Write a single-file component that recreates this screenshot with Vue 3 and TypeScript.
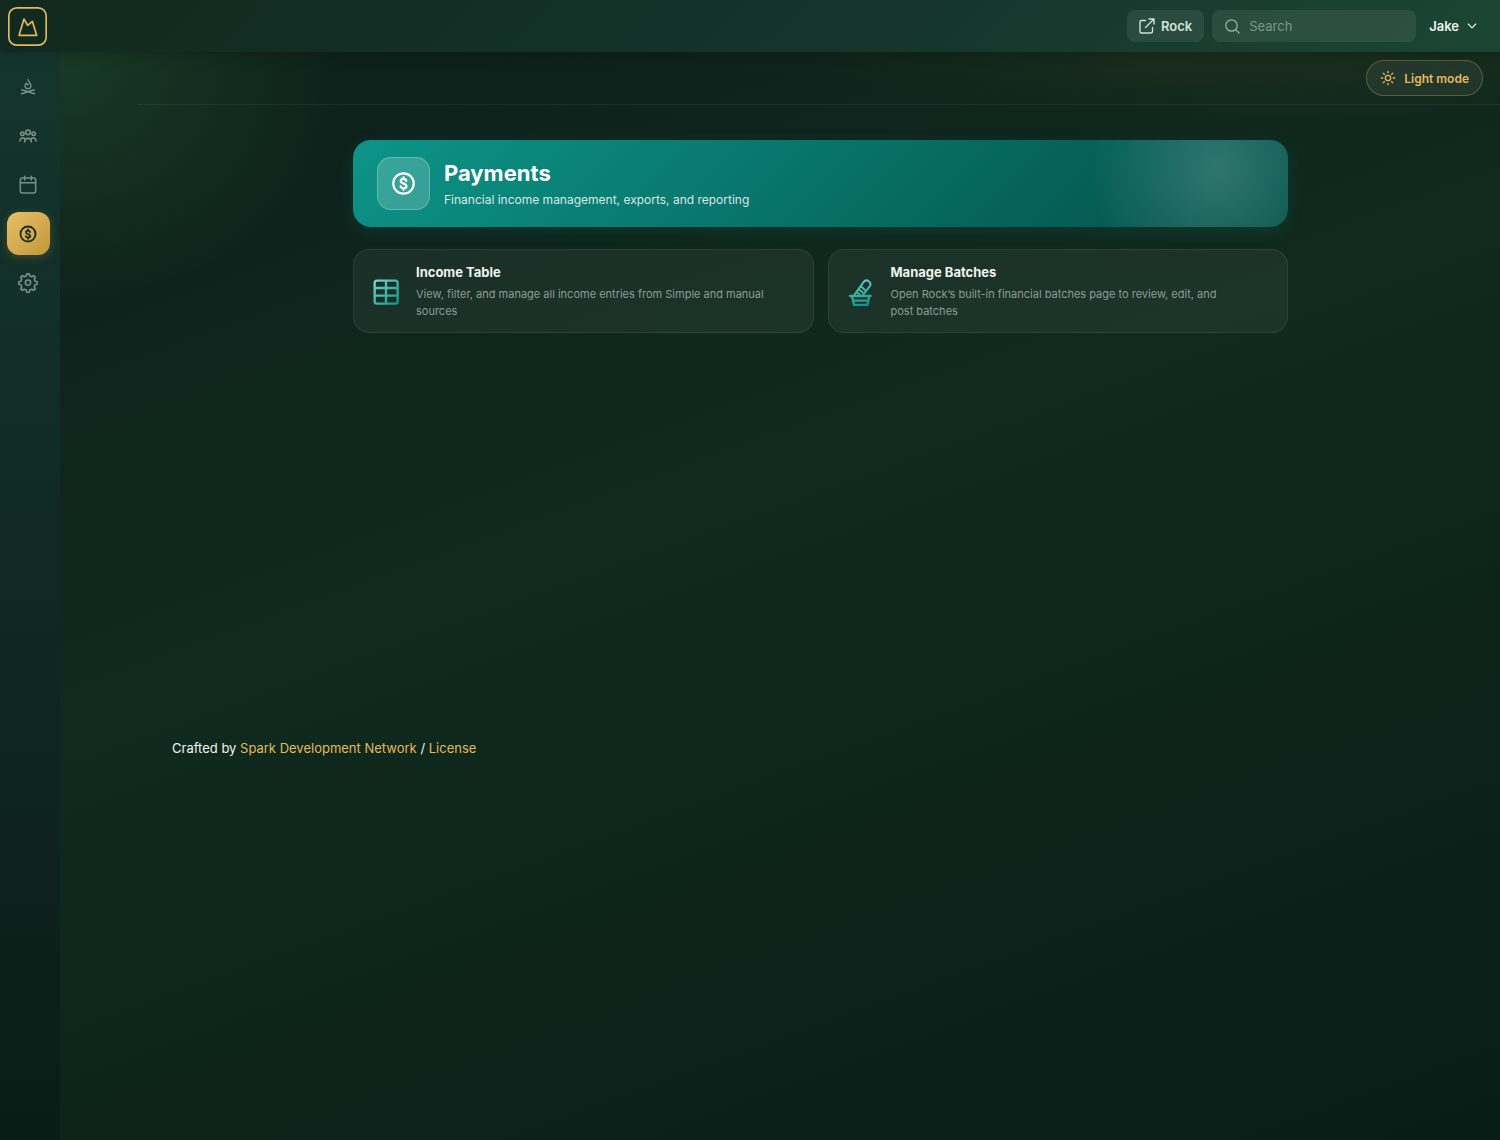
<script setup lang="ts">
import { ref } from 'vue'

interface NavItem {
  id: string
  label: string
}

interface ActionCard {
  id: string
  title: string
  text: string
}

const navItems: NavItem[] = [
  { id: 'home', label: 'Campfire' },
  { id: 'people', label: 'People' },
  { id: 'calendar', label: 'Calendar' },
  { id: 'payments', label: 'Payments' },
  { id: 'settings', label: 'Settings' },
]

const cards: ActionCard[] = [
  {
    id: 'table',
    title: 'Income Table',
    text: 'View, filter, and manage all income entries from Simple and manual sources',
  },
  {
    id: 'batches',
    title: 'Manage Batches',
    text: 'Open Rock’s built-in financial batches page to review, edit, and post batches',
  },
]

const active = ref('payments')
const query = ref('')
</script>

<template>
  <div class="app">
    <header class="topbar">
      <a class="logo" href="#" aria-label="Home">
        <svg width="39" height="39" viewBox="0 0 117 117" fill="none" stroke="currentColor">
          <rect x="2.5" y="2.5" width="112" height="112" rx="24" stroke-width="5" />
          <path d="M33 85 48 36l11 19 14-12 13 42z" stroke-width="5" stroke-linejoin="round" />
        </svg>
      </a>
      <div class="tools">
        <a class="rock" href="#">
          <svg width="16" height="16" viewBox="0 0 16 16" fill="none" stroke="currentColor" stroke-width="1.4" stroke-linecap="round" stroke-linejoin="round">
            <path d="M6.500 2.500H2.500a1.500 1.500 0 0 0-1.500 1.500v9.500A1.500 1.500 0 0 0 2.500 15H12a1.500 1.500 0 0 0 1.500-1.500V9.500M10 1h5v5M15 1 6.500 9.500" />
          </svg>
          <span>Rock</span>
        </a>
        <label class="search">
          <svg width="15" height="15" viewBox="0 0 15 15" fill="none" stroke="currentColor" stroke-width="1.200" stroke-linecap="round">
            <circle cx="6.500" cy="6.500" r="5.700" />
            <path d="m10.700 10.700 3.300 3.300" />
          </svg>
          <input v-model="query" type="search" placeholder="Search" aria-label="Search" />
        </label>
        <button class="user" type="button">
          <span>Jake</span>
          <svg width="10" height="6" viewBox="0 0 10 6" fill="none" stroke="currentColor" stroke-width="1.100" stroke-linecap="round" stroke-linejoin="round">
            <path d="m1.200 1 3.800 3.800L8.800 1" />
          </svg>
        </button>
      </div>
    </header>

    <div class="body">
      <nav class="sidebar" aria-label="Main">
        <a
          v-for="item in navItems"
          :key="item.id"
          href="#"
          class="nav-item"
          :class="{ active: item.id === active }"
          :aria-label="item.label"
          @click.prevent="active = item.id"
        >
          <svg v-if="item.id === 'home'" width="20" height="20" viewBox="0 0 60 60" fill="none" stroke="currentColor" stroke-width="5" stroke-linecap="round" stroke-linejoin="round">
            <path d="M30 7c-1 6 9 10 9 19a9 9 0 0 1-18 0c0-4 2-7 4-8 0 5 5 7 7 3" stroke-width="4" />
            <path d="M11 39c7 0 12 3 19 5s12 5 19 6M49 39c-7 0-12 3-19 5s-12 5-19 6" />
          </svg>
          <svg v-else-if="item.id === 'people'" width="20" height="20" viewBox="0 0 60 60" fill="none" stroke="currentColor" stroke-width="5" stroke-linecap="round" stroke-linejoin="round">
            <circle cx="30" cy="19" r="7" />
            <circle cx="13" cy="23" r="5" />
            <circle cx="47" cy="23" r="5" />
            <path d="M20 47c0-13 20-13 20 0M6 45c0-8 7-11 13-8M54 45c0-8-7-11-13-8" />
          </svg>
          <svg v-else-if="item.id === 'calendar'" width="20" height="20" viewBox="0 0 60 60" fill="none" stroke="currentColor" stroke-width="4.500" stroke-linecap="round" stroke-linejoin="round">
            <rect x="7" y="9" width="46" height="45" rx="6" />
            <path d="M7 23h46M20 4v11M40 4v11" />
          </svg>
          <svg v-else-if="item.id === 'payments'" width="20" height="20" viewBox="0 0 256 256" fill="none" stroke="currentColor" stroke-width="24" stroke-linecap="round" stroke-linejoin="round">
            <circle cx="128" cy="128" r="96" />
            <path d="M154 104c-3-13-13-19-26-19-15 0-26 8-26 20 0 30 54 18 54 48 0 12-12 20-28 20-14 0-25-6-28-18M128 70v14M128 174v14" />
          </svg>
          <svg v-else width="20" height="20" viewBox="0 0 24 24" fill="none" stroke="currentColor" stroke-width="1.900" stroke-linecap="round" stroke-linejoin="round">
            <circle cx="12" cy="11.500" r="3.200" />
            <path d="M9.900 3.500 10.500 1h3l.6 2.500 2.400 1 2.200-1.300 2.100 2.100-1.300 2.200 1 2.400 2.500.6v3l-2.500.6-1 2.400 1.300 2.200-2.100 2.100-2.200-1.300-2.400 1-.6 2.500h-3l-.6-2.500-2.400-1-2.200 1.300-2.100-2.100 1.300-2.200-1-2.400L1 13.500v-3l2.500-.6 1-2.400-1.300-2.200 2.100-2.100 2.200 1.300z" />
          </svg>
        </a>
      </nav>

      <main class="main">
        <div class="modebar">
          <button class="mode" type="button">
            <svg width="16" height="16" viewBox="0 0 48 48" fill="none" stroke="currentColor" stroke-width="4" stroke-linecap="round">
              <circle cx="24" cy="24" r="8" />
              <path d="M24 4v4M24 40v4M4 24h4M40 24h4M10 10l3 3M35 35l3 3M10 38l3-3M35 13l3-3" />
            </svg>
            <span>Light mode</span>
          </button>
        </div>

        <div class="content">
          <section class="page">
            <div class="hero">
              <div class="hero-icon">
                <svg width="27" height="27" viewBox="0 0 256 256" fill="none" stroke="currentColor" stroke-width="21" stroke-linecap="round" stroke-linejoin="round">
                  <circle cx="128" cy="128" r="97" />
                  <path d="M154 104c-3-13-13-19-26-19-15 0-26 8-26 20 0 30 54 18 54 48 0 12-12 20-28 20-14 0-25-6-28-18M128 70v14M128 174v14" />
                </svg>
              </div>
              <div class="hero-copy">
                <h1>Payments</h1>
                <p>Financial income management, exports, and reporting</p>
              </div>
            </div>

            <div class="cards">
              <a v-for="card in cards" :key="card.id" class="card" href="#">
                <svg v-if="card.id === 'table'" class="card-icon" width="28" height="28" viewBox="0 0 84 84" fill="none" stroke="url(#teal-table)" stroke-width="7">
                  <defs>
                    <linearGradient id="teal-table" gradientUnits="userSpaceOnUse" x1="5" y1="5" x2="79" y2="79">
                      <stop offset="0" stop-color="#7fd8cd" />
                      <stop offset="1" stop-color="#0d9488" />
                    </linearGradient>
                  </defs>
                  <rect x="8" y="8" width="69" height="69" rx="7" />
                  <path d="M8 30h69M8 53h69M42 8v69" />
                </svg>
                <svg v-else class="card-icon" width="28" height="28" viewBox="0 0 84 84" fill="none" stroke="url(#teal-basket)" stroke-width="6" stroke-linecap="round" stroke-linejoin="round">
                  <defs>
                    <linearGradient id="teal-basket" gradientUnits="userSpaceOnUse" x1="30" y1="2" x2="50" y2="84">
                      <stop offset="0" stop-color="#6fd0c5" />
                      <stop offset="1" stop-color="#0d9488" />
                    </linearGradient>
                  </defs>
                  <path d="M21 52 50 12c9-11 26 1 18 13L47 52M44 27l9 8M37 35l9 8M30 43l9 8" />
                  <path d="M9 54h62M15 55l6 26h40l6-26M20 68h42" stroke-width="7" />
                </svg>
                <div class="card-copy">
                  <h2>{{ card.title }}</h2>
                  <p>{{ card.text }}</p>
                </div>
              </a>
            </div>
          </section>

          <footer class="footer">
            Crafted by <a href="#">Spark Development Network</a> / <a href="#">License</a>
          </footer>
        </div>
      </main>
    </div>
  </div>
</template>

<style>
body {
  background: #0a1c16;
}
</style>

<style scoped>
.app {
  min-height: 100vh;
  display: flex;
  flex-direction: column;
  font-family: Inter, "Liberation Sans", sans-serif;
  color: #f1f5f0;
}

.app * {
  box-sizing: border-box;
}

a {
  color: inherit;
  text-decoration: none;
}

button {
  font: inherit;
  cursor: pointer;
}

h1,
h2,
p {
  margin: 0;
}

.topbar {
  position: relative;
  z-index: 1;
  display: flex;
  align-items: center;
  justify-content: space-between;
  height: 52px;
  padding: 0 23px 0 8px;
  background: linear-gradient(135deg, #11291f 0%, #15352c 60%, #1c4634 100%);
  box-shadow: 0 2px 12px rgba(0, 0, 0, 0.2);
}

.logo {
  display: flex;
  color: #e3b95b;
}

.tools {
  display: flex;
  align-items: center;
  gap: 8px;
}

.rock,
.search {
  display: flex;
  align-items: center;
  height: 32px;
  border-radius: 8px;
  background: rgba(255, 255, 255, 0.08);
}

.rock {
  gap: 6px;
  padding: 0 12px;
  font-size: 13px;
  font-weight: 600;
  color: #d5e0d9;
}

.search {
  width: 204px;
  gap: 9px;
  padding: 0 13px;
  color: #9fb3a9;
}

.search input {
  flex: 1;
  min-width: 0;
  border: 0;
  padding: 0;
  outline: none;
  background: none;
  font: inherit;
  font-size: 13px;
  color: #f1f5f0;
}

.search input::placeholder {
  color: #7d968b;
  opacity: 1;
}

.user {
  display: flex;
  align-items: center;
  gap: 8px;
  margin-left: 5px;
  padding: 0;
  border: 0;
  background: none;
  font-size: 13px;
  font-weight: 600;
  color: #eef4f0;
}

.body {
  flex: 1;
  display: flex;
}

.sidebar {
  width: 60px;
  display: flex;
  flex-direction: column;
  align-items: center;
  gap: 6px;
  padding: 13px 4px 13px 0;
  background: linear-gradient(180deg, #14352d 0%, #102822 52%, #0a1c16 100%);
}

.nav-item {
  display: flex;
  align-items: center;
  justify-content: center;
  width: 43px;
  height: 43px;
  border-radius: 12px;
  color: #789085;
}

.nav-item.active {
  color: #1b2c1f;
  background: linear-gradient(135deg, #e6c067, #c4973a);
  box-shadow: 0 2px 8px rgba(212, 168, 75, 0.25);
}

.main {
  flex: 1;
  min-width: 0;
  padding-left: 78px;
  background:
    radial-gradient(ellipse 290px 240px at 0 10px, rgba(45, 100, 55, 0.38), transparent),
    radial-gradient(ellipse 440px 70px at 82% 0, rgba(120, 100, 30, 0.13), transparent),
    linear-gradient(160deg, #0d1f1a 0%, #102a1f 42%, #0a1c16 100%);
}

.modebar {
  display: flex;
  align-items: center;
  justify-content: flex-end;
  height: 53px;
  padding-right: 17px;
  border-bottom: 1px solid rgba(255, 255, 255, 0.06);
}

.mode {
  display: flex;
  align-items: center;
  gap: 8px;
  height: 36px;
  padding: 0 13px;
  border: 1px solid rgba(227, 185, 91, 0.3);
  border-radius: 18px;
  background: rgba(255, 255, 255, 0.06);
  font-size: 12px;
  font-weight: 600;
  color: #e3b95b;
}

.content {
  padding: 35px 31px 32px 34px;
}

.page {
  max-width: 935px;
  min-height: 598px;
  margin: 0 auto;
}

.hero {
  display: flex;
  align-items: center;
  gap: 14px;
  height: 87px;
  padding: 0 24px;
  border-radius: 18px;
  background:
    radial-gradient(circle 130px at calc(100% - 70px) 30px, rgba(255, 255, 255, 0.17), transparent),
    linear-gradient(135deg, #0d9488 0%, #055e55 78%, #06534b 100%);
  box-shadow: 0 4px 16px rgba(13, 148, 136, 0.16);
}

.hero-icon {
  display: flex;
  align-items: center;
  justify-content: center;
  width: 53px;
  height: 53px;
  border: 1px solid rgba(255, 255, 255, 0.25);
  border-radius: 14px;
  background: rgba(255, 255, 255, 0.18);
  color: #fff;
}

h1 {
  font-size: 22px;
  line-height: 30px;
  font-weight: 700;
  color: #fff;
}

.hero-copy p {
  margin-top: 3px;
  font-size: 12px;
  line-height: 18px;
  color: rgba(255, 255, 255, 0.85);
}

.cards {
  display: grid;
  grid-template-columns: repeat(2, 1fr);
  gap: 14px;
  margin-top: 22px;
}

.card {
  display: flex;
  align-items: center;
  gap: 16px;
  padding: 13px 47px 12px 18px;
  border: 1px solid rgba(255, 255, 255, 0.08);
  border-radius: 16px;
  background: rgba(255, 255, 255, 0.05);
}

.card-icon {
  flex: none;
}

h2 {
  font-size: 13px;
  line-height: 18px;
  font-weight: 700;
  color: #eef3ec;
}

.card-copy p {
  margin-top: 5px;
  font-size: 11px;
  line-height: 17px;
  color: #8d9c94;
}

.footer {
  font-size: 13px;
  line-height: 20px;
}

.footer a {
  color: #e3b95b;
}
</style>
